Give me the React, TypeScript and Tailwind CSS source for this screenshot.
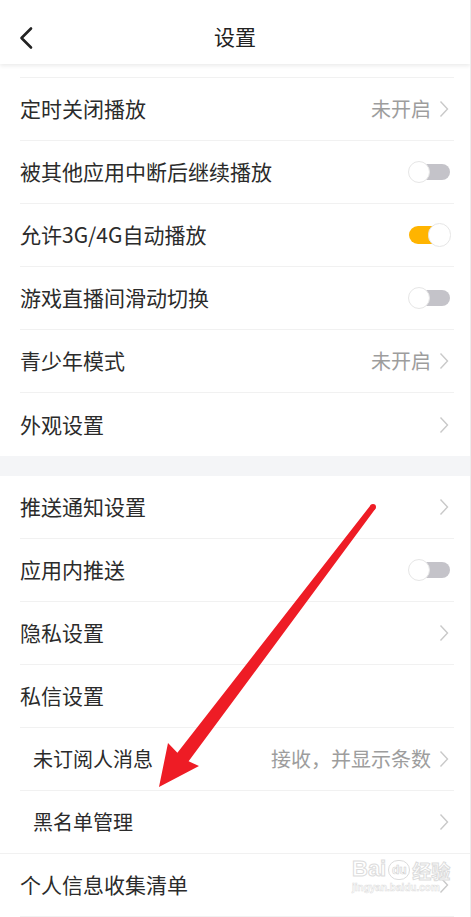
import React from 'react';

type Item = {
  label: string;
  value?: string;
  toggle?: 'on' | 'off';
  chevron?: boolean;
  sub?: boolean;
  fullLine?: boolean;
  noLine?: boolean;
};

const groupA: Item[] = [
  { label: '定时关闭播放', value: '未开启', chevron: true },
  { label: '被其他应用中断后继续播放', toggle: 'off' },
  { label: '允许3G/4G自动播放', toggle: 'on' },
  { label: '游戏直播间滑动切换', toggle: 'off' },
  { label: '青少年模式', value: '未开启', chevron: true },
  { label: '外观设置', chevron: true, noLine: true },
];

const groupB: Item[] = [
  { label: '推送通知设置', chevron: true },
  { label: '应用内推送', toggle: 'off' },
  { label: '隐私设置', chevron: true },
  { label: '私信设置' },
  { label: '未订阅人消息', value: '接收，并显示条数', chevron: true, sub: true },
  { label: '黑名单管理', chevron: true, sub: true, fullLine: true },
  { label: '个人信息收集清单', chevron: true },
];

function Chevron() {
  return (
    <svg width="10" height="18" viewBox="0 0 10 18" className="ml-[8px] shrink-0">
      <polyline points="1.5,1.5 8.5,9 1.5,16.5" fill="none" stroke="#c9c9c9" strokeWidth="1.4" />
    </svg>
  );
}

function Toggle({ on }: { on: boolean }) {
  return (
    <div className="relative w-[43px] h-[24px] shrink-0">
      <div
        className={
          on
            ? 'absolute left-[1px] right-[2px] top-[3px] h-[18px] rounded-full bg-[#ffb400]'
            : 'absolute left-[2px] right-[1px] top-[4px] h-[16px] rounded-full bg-[#c4c3c9]'
        }
      />
      <div
        className={
          on
            ? 'absolute right-0 top-0 w-[23px] h-[24px] rounded-full bg-white border border-[#e6e6e6]'
            : 'absolute left-0 top-[1px] w-[22px] h-[22px] rounded-full bg-white border border-[#e6e6e6]'
        }
      />
    </div>
  );
}

function Row({ item }: { item: Item }) {
  const line = item.noLine ? '' : 'border-b border-[#f1f1f1]';
  const content = (
    <div className={`flex items-center ${item.noLine ? 'h-[63px]' : 'h-[62px]'} ${item.sub ? 'pl-[13px] text-[20px]' : 'text-[21px]'}`}>
      <span className="text-[#2b2b2b] flex-1 whitespace-nowrap">{item.label}</span>
      {item.value && <span className="text-[#9d9d9d] text-[20px] whitespace-nowrap">{item.value}</span>}
      {item.chevron && <Chevron />}
      {item.toggle && <Toggle on={item.toggle === 'on'} />}
    </div>
  );
  if (item.fullLine) {
    return (
      <div className={line}>
        <div className="ml-5 mr-[21px]">{content}</div>
      </div>
    );
  }
  return <div className={`ml-5 mr-4 ${line} ${item.toggle ? 'pr-[3px]' : 'pr-[5px]'}`}>{content}</div>;
}

export default function App() {
  return (
    <div
      className="relative w-[471px] h-[917px] overflow-hidden bg-white border-r border-[#ececec]"
      style={{ fontFamily: '"Noto Sans CJK SC", "Noto Sans", sans-serif' }}
    >
      <div className="relative z-10 h-[64px] bg-white shadow-[0_2px_4px_rgba(0,0,0,0.08)] flex items-center pt-[11px]">
        <svg width="16" height="24" viewBox="0 0 16 24" className="ml-[18px]">
          <polyline points="13,2.5 3.5,12 13,21.5" fill="none" stroke="#222" strokeWidth="2.6" strokeLinecap="round" strokeLinejoin="round" />
        </svg>
        <div className="absolute left-0 right-0 top-0 h-[64px] flex items-center justify-center pt-[10px] text-[21px] text-[#222]">设置</div>
      </div>

      <div className="h-[14px] ml-5 mr-4 border-b border-[#f1f1f1]" />
      {groupA.map((it) => (
        <Row key={it.label} item={it} />
      ))}
      <div className="h-[20px] bg-[#f4f5f7]" />
      {groupB.map((it) => (
        <Row key={it.label} item={it} />
      ))}

      <svg className="absolute left-0 top-0 pointer-events-none" width="471" height="917" viewBox="0 0 471 917">
        <polygon
          points="370.6,505.2 177.4,752.7 168,743 159,787 199,766 188.6,761.3 375.4,508.8"
          fill="#ee1c25"
        />
        <circle cx="373" cy="507" r="3" fill="#ee1c25" />
      </svg>

      <div className="absolute left-[352px] top-[858px] w-[100px] pointer-events-none">
        <div className="flex items-end">
          <span className="text-[22px] leading-none font-bold text-white [-webkit-text-stroke:1px_#dcdcdc]" style={{ fontFamily: '"Liberation Sans", sans-serif' }}>Bai</span>
          <span className="relative mx-[2px] w-[22px] h-[20px] rounded-full border border-[#dcdcdc] text-[12px] leading-[18px] text-center font-bold text-white [-webkit-text-stroke:0.6px_#d0d0d0]" style={{ fontFamily: '"Liberation Sans", sans-serif' }}>du</span>
          <span className="text-[19px] leading-none font-bold text-white [-webkit-text-stroke:1px_#dcdcdc]">经验</span>
        </div>
        <div className="mt-[3px] text-[10px] leading-none font-bold text-white [-webkit-text-stroke:0.5px_#dcdcdc]" style={{ fontFamily: '"Liberation Sans", sans-serif' }}>jingyan.baidu.com</div>
      </div>
    </div>
  );
}
